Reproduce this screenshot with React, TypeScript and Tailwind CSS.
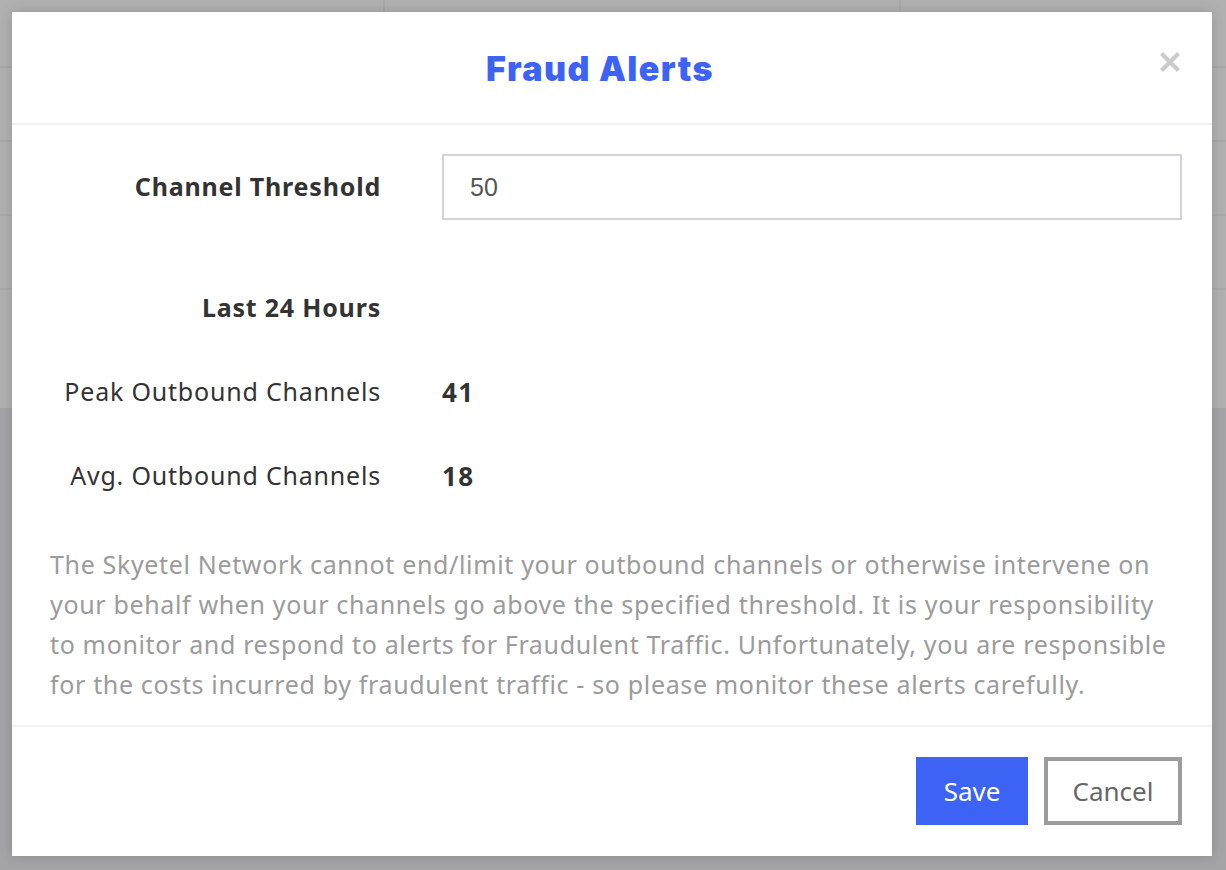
import React from "react";

const rowHeights = ["h-[68px]", "h-[74px]", "h-[74px]", "h-[74px]"];

function Backdrop() {
  return (
    <div className="flex flex-col w-[1226px] h-[870px] bg-[#a4a4a6]">
      <div className="flex flex-col h-[408px] bg-[#b0b0b0]">
        {rowHeights.map((h, i) => (
          <div key={i} className={`grid grid-cols-[385px_516px_1fr] ${h} border-b-2 border-[#a8a8a8]`}>
            <div className="border-r-2 border-[#a8a8a8]" />
            <div className="border-r-2 border-[#a8a8a8]" />
            <div />
          </div>
        ))}
        <div className="grid grid-cols-[385px_516px_1fr] flex-1">
          <div className="border-r-2 border-[#a8a8a8]" />
          <div className="border-r-2 border-[#a8a8a8]" />
          <div />
        </div>
      </div>
    </div>
  );
}

function CloseIcon() {
  return (
    <svg width="20" height="20" viewBox="0 0 20 20" className="text-[#cbcbcb]">
      <path d="M3 3 L17 17 M17 3 L3 17" stroke="currentColor" strokeWidth="4.2" strokeLinecap="square" />
    </svg>
  );
}

export default function App() {
  // IBM Plex is wider than Noto Sans, so a bit of tracking makes up the width
  const label = "text-right text-[25px] tracking-[0.8px] text-[#333]";
  const value = "text-[26px] tracking-[1.5px] font-bold text-[#333]";
  return (
    <div className="relative font-['Noto_Sans',sans-serif]">
      <Backdrop />
      <div className="absolute left-[12px] top-[12px] w-[1200px] h-[844px] bg-white flex flex-col shadow-[0_0_12px_rgba(0,0,0,0.15)]">
        <div className="relative shrink-0 h-[113px] flex items-center justify-center border-b-2 border-[#f1f1f1]">
          <h2 className="mr-[24px] mt-[2px] font-['Inter',sans-serif] font-black text-[34px] tracking-[1.4px] text-[#3c63f5] leading-none">
            Fraud Alerts
          </h2>
          <button className="absolute right-[32px] top-[40px]">
            <CloseIcon />
          </button>
        </div>

        <div className="shrink-0 flex flex-col pl-[38px] pr-[30px] pt-[29px] pb-[21px] border-b-2 border-[#f1f1f1]">
          <div className="grid grid-cols-[331px_1fr] gap-x-[61px] items-center h-[66px]">
            <span className={`${label} font-bold`}>Channel Threshold</span>
            <input
              defaultValue="50"
              className="h-[66px] border-2 border-[#d1d4db] px-[26px] text-[25px] text-[#555] font-['Liberation_Sans',sans-serif] outline-none"
            />
          </div>
          <div className="grid grid-cols-[331px_1fr] gap-x-[61px] items-center h-[40px] mt-[68px]">
            <span className={`${label} font-bold`}>Last 24 Hours</span>
            <span />
          </div>
          <div className="grid grid-cols-[331px_1fr] gap-x-[61px] items-center h-[40px] mt-[44px]">
            <span className={label}>Peak Outbound Channels</span>
            <span className={value}>41</span>
          </div>
          <div className="grid grid-cols-[331px_1fr] gap-x-[61px] items-center h-[40px] mt-[44px]">
            <span className={label}>Avg. Outbound Channels</span>
            <span className={value}>18</span>
          </div>
          <p className="mt-[48px] text-[25px] tracking-[0.65px] leading-[40px] text-[#9b9b9b]">
            The Skyetel Network cannot end/limit your outbound channels or otherwise intervene on your behalf when
            your channels go above the specified threshold. It is your responsibility to monitor and respond to alerts
            for Fraudulent Traffic. Unfortunately, you are responsible for the costs incurred by fraudulent traffic - so
            please monitor these alerts carefully.
          </p>
        </div>

        <div className="shrink-0 flex justify-end gap-[16px] pr-[30px] pt-[30px]">
          <button className="w-[112px] h-[68px] bg-[#3d63f5] text-white text-[26px]">Save</button>
          <button className="w-[138px] h-[68px] border-4 border-[#9c9c9c] text-[#666] text-[26px]">Cancel</button>
        </div>
      </div>
    </div>
  );
}
